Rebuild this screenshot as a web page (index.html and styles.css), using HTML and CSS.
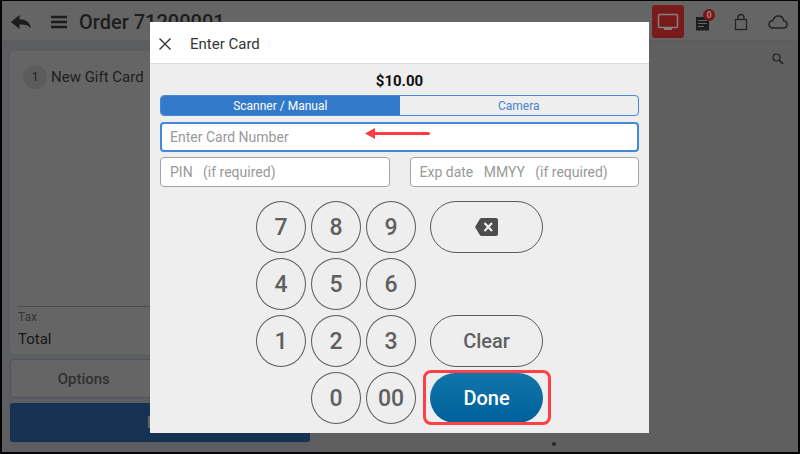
FILE: index.html
```html
<!DOCTYPE html>
<html lang="en">
<head>
<meta charset="utf-8">
<title>Order 71200001</title>
<link rel="stylesheet" href="styles.css">
</head>
<body>
<div class="app">
  <header class="topbar">
    <button class="icon-btn" aria-label="Back"><svg width="20" height="14" viewBox="0 0 20 14"><path d="M0 7 8.500 0v4.200C14.500 4.200 19 7.500 20 13c-3-3-6.500-3.800-11.500-3.500V14z" fill="#1c1c1c"/></svg></button>
    <button class="icon-btn menu-btn" aria-label="Menu"><svg width="18" height="14" viewBox="0 0 18 14"><path d="M1 2h16M1 7h16M1 12h16" stroke="#1c1c1c" stroke-width="2.400"/></svg></button>
    <h1 class="order-title">Order 71200001</h1>
    <button class="icon-btn screen-btn" aria-label="Customer display"><svg width="22" height="18" viewBox="0 0 22 18"><rect x="1.500" y="1.500" width="19" height="13" rx="1" fill="none" stroke="#858080" stroke-width="1.500"/><path d="M7 15h8v2H7z" fill="#858080"/></svg></button>
    <button class="icon-btn receipt-btn" aria-label="Receipts"><svg width="13" height="14" viewBox="0 0 13 14"><path d="M0 0h13v14l-1.500-1-1.500 1-1.700-1-1.800 1-1.700-1L3 14l-1.500-1L0 14z" fill="#1e1e1e"/><path d="M2 3.500h9M2 6.500h9M2 9.500h6" stroke="#666" stroke-width="1.200"/></svg><span class="badge">0</span></button>
    <button class="icon-btn lock-btn" aria-label="Lock"><svg width="14" height="18" viewBox="0 0 14 18"><rect x="1.500" y="6.500" width="11" height="10" fill="none" stroke="#242424" stroke-width="1.300"/><path d="M4 6V4.500a3 3 0 0 1 6 0V6" fill="none" stroke="#242424" stroke-width="1.300"/></svg></button>
    <button class="icon-btn" aria-label="Cloud"><svg width="20" height="14" viewBox="0 0 20 14"><path d="M5 13C2.600 13 1 11.500 1 9.300S2.700 5.700 5 5.500C5.800 2.700 7.700 1 10.300 1c2.900 0 4.900 1.900 5.300 4.800 2.100.2 3.400 1.600 3.400 3.500 0 2.200-1.500 3.700-3.700 3.700z" fill="none" stroke="#242424" stroke-width="1.500"/></svg></button>
  </header>
  <main class="content">
    <section class="order">
      <div class="ticket">
        <div class="line"><span class="qty">1</span><span>New Gift Card</span></div>
        <div class="totals"><div class="tax">Tax</div><div class="total">Total</div></div>
      </div>
      <div class="actions"><button class="action">Options</button><button class="action">Save</button></div>
      <button class="pay">Pay</button>
    </section>
    <section class="catalog">
      <button class="icon-btn" aria-label="Search"><svg width="12" height="12" viewBox="0 0 12 12"><circle cx="4.500" cy="4.500" r="3.500" fill="none" stroke="#222" stroke-width="1.200"/><path d="m7 7 4 4" stroke="#222" stroke-width="1.700"/></svg></button>
      <span class="page-dot"></span>
    </section>
  </main>
</div>

<div class="overlay">
  <div class="dialog" role="dialog" aria-labelledby="dialog-title">
    <div class="dialog-head">
      <button class="icon-btn" aria-label="Close"><svg width="12" height="12" viewBox="0 0 12 12"><path d="m.5.5 11 11m0-11-11 11" stroke="#333" stroke-width="1.400"/></svg></button>
      <h2 id="dialog-title">Enter Card</h2>
    </div>
    <div class="dialog-body">
      <div class="amount">$10.00</div>
      <div class="tabs"><button class="tab tab-on">Scanner / Manual</button><button class="tab">Camera</button></div>
      <div class="card-field">
        <input class="field field-focus" type="text" aria-label="Card number" placeholder="Enter Card Number">
        <svg class="arrow" width="66" height="12" viewBox="0 0 66 12"><path d="M8 6.500h55.500" stroke="#fb3d42" stroke-width="3" stroke-linecap="round"/><path d="M0 6.500 10 1v11z" fill="#fb3d42"/></svg>
      </div>
      <div class="field-row">
        <input class="field" type="text" aria-label="PIN" placeholder="PIN &nbsp; (if required)">
        <input class="field" type="text" aria-label="Expiry date" placeholder="Exp date &nbsp; MMYY &nbsp; (if required)">
      </div>
      <div class="keypad">
        <button class="key">7</button><button class="key">8</button><button class="key">9</button>
        <button class="key wide" aria-label="Backspace"><svg width="23" height="18" viewBox="0 0 23 18"><path d="M6.500 0H21a2 2 0 0 1 2 2v14a2 2 0 0 1-2 2H6.500a2 2 0 0 1-1.500-.8L0 9 5 .8A2 2 0 0 1 6.500 0z" fill="#4d4d4d"/><path d="m9.500 5 7.500 8m0-8-7.500 8" stroke="#eee" stroke-width="2.200"/></svg></button>
        <button class="key first">4</button><button class="key">5</button><button class="key">6</button>
        <button class="key first">1</button><button class="key">2</button><button class="key">3</button>
        <button class="key wide">Clear</button>
        <button class="key second">0</button><button class="key">00</button>
        <div class="done-cell"><button class="key wide-done">Done</button><span class="callout"></span></div>
      </div>
    </div>
  </div>
</div>
</body>
</html>
```
FILE: styles.css
```css
* { box-sizing: border-box; }
html, body { height: 100%; margin: 0; }
body { font-family: Roboto, sans-serif; position: relative; overflow: hidden; }
button { font: inherit; color: inherit; margin: 0; padding: 0; border: 0; background: none; }
svg { display: block; }
h1, h2 { margin: 0; }
.icon-btn { display: flex; align-items: center; justify-content: center; }

.app { height: 100%; border: 2px solid #050505; border-top-width: 1px; display: flex; flex-direction: column; background: #5f5f5f; }
.topbar { height: 40px; flex: none; display: flex; align-items: center; padding: 2px 10px 0 9px; background: #656565; border-bottom: 1px solid #5b5b5b; }
.menu-btn { margin: 0 11px 0 19px; }
.order-title { flex: 1; font-size: 20px; line-height: 26px; font-weight: 500; color: #1d1d1d; }
.screen-btn { width: 32px; height: 33px; border-radius: 3px; background: #791b1b; }
.receipt-btn { position: relative; margin-left: 12px; padding-top: 4px; }
.badge { position: absolute; left: 7px; top: -4px; width: 12px; height: 12px; border-radius: 50%; background: #791717; color: #aa8080; font-size: 9px; line-height: 12px; font-weight: 700; text-align: center; }
.lock-btn { margin: 0 20px 0 25px; }

.content { flex: 1; display: flex; min-height: 0; }
.order { width: 316px; padding: 10px 8px 10px 8px; display: flex; flex-direction: column; gap: 5px; background: #5c5e61; }
.ticket { flex: 1; display: flex; flex-direction: column; justify-content: space-between; padding: 14px 8px 1px; border-radius: 4px; background: #656565; color: #202020; }
.line { display: flex; align-items: center; gap: 4px; padding-left: 5px; font-size: 15px; }
.qty { width: 24px; height: 24px; border-radius: 50%; background: #5c5c5c; font-size: 12px; line-height: 24px; text-align: center; }
.totals { border-top: 1px solid #4b4b4b; }
.tax { padding-top: 2px; font-size: 12px; line-height: 16px; color: #353535; }
.total { font-size: 15px; line-height: 28px; color: #161616; }
.actions { display: flex; gap: 5px; }
.action { flex: 1; height: 39px; border: 1px solid #505359; border-radius: 4px; background: #656565; color: #303030; font-size: 15px; font-weight: 500; }
.pay { height: 39px; border-radius: 3px; background: #173354; color: #656565; font-size: 16px; font-weight: 500; }
.catalog { flex: 1; display: flex; flex-direction: column; align-items: center; justify-content: space-between; padding: 12px 8px 6px 0; }
.catalog .icon-btn { align-self: flex-end; margin-right: 6px; }
.page-dot { width: 4px; height: 4px; border-radius: 50%; background: #262626; }

.overlay { position: absolute; inset: 0; display: flex; justify-content: center; align-items: center; padding: 1px 1px 0 0; }
.dialog { width: 499px; background: #eee; }
.dialog-head { height: 42px; display: flex; align-items: center; gap: 19px; padding: 2px 9px 0; background: #fff; border-bottom: 1px solid #dcdcdc; }
.dialog-head h2 { font-size: 15px; line-height: 20px; font-weight: 400; color: #353535; }
.dialog-body { padding: 7px 10px 9px; }
.amount { font-size: 15px; line-height: 20px; font-weight: 700; color: #111; text-align: center; }
.tabs { display: flex; height: 21px; margin: 4px 0 6px; border: 1px solid #4688d3; border-radius: 4px; overflow: hidden; }
.tab { flex: 1; font-size: 12px; color: #4684cc; }
.tab-on { background: #347acb; color: #fff; }
.card-field { position: relative; display: flex; }
.arrow { position: absolute; left: 205px; top: 5px; }
.field { flex: 1; min-width: 0; height: 30px; margin: 0; padding: 0 9px; border: 1px solid #a5a5a5; border-radius: 4px; background: #fff; font: 14px Roboto, sans-serif; color: #333; }
.field::placeholder { color: #999; opacity: 1; }
.field-focus { border: 2px solid #4389db; padding: 0 8px; outline: none; }
.field-row { display: flex; gap: 20px; margin-top: 5px; }

.keypad { display: grid; grid-template-columns: 50px 50px 50px 122px; gap: 5px; justify-content: center; margin-top: 14px; }
.key { height: 52px; border: 1px solid #5b5b5b; border-radius: 50%; color: #606060; font-size: 23px; font-weight: 500; display: flex; align-items: center; justify-content: center; }
.wide { margin-left: 9px; border-radius: 26px; font-size: 20px; }
.first { grid-column: 1; }
.second { grid-column: 2; }
.done-cell { position: relative; margin-left: 9px; display: flex; align-items: center; }
.wide-done { width: 100%; height: 50px; border: 0; border-radius: 25px; background: linear-gradient(#1176aa, #00609a); color: #fff; font-size: 20px; }
.callout { position: absolute; inset: -2px -8px -1px -7px; border: 3px solid #fb4145; border-radius: 8px; pointer-events: none; }
```
